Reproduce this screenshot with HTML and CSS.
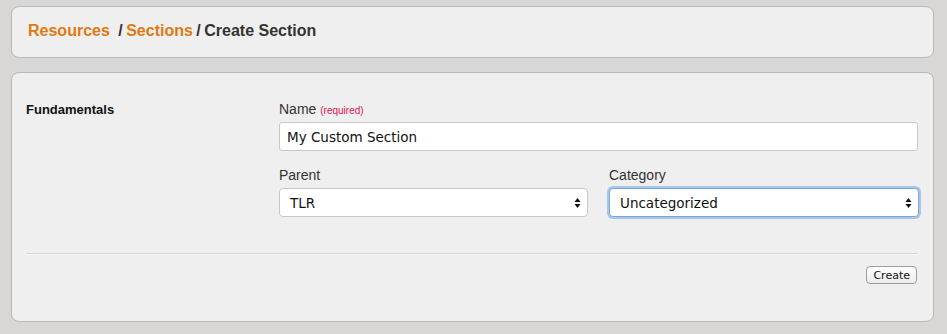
FILE: index.html
```html
<!DOCTYPE html>
<html>
<head>
<meta charset="utf-8">
<link rel="stylesheet" href="styles.css">
</head>
<body>
<div class="panel crumbs">
  <a class="crumb first" href="#">Resources</a> <span class="sep">/</span> <a class="crumb" href="#">Sections</a> <span class="sep">/</span> <span class="current">Create Section</span>
</div>
<div class="panel form">
  <div class="row">
    <div class="legend">Fundamentals</div>
    <div class="fields">
      <div class="field">
        <label class="label">Name <span class="req">(required)</span></label>
        <div class="input">My Custom Section</div>
      </div>
      <div class="pair">
        <div class="field">
          <label class="label">Parent</label>
          <div class="select"><span>TLR</span><svg class="arrows" width="7" height="12" viewBox="0 0 7 12"><path d="M3.5 1 L6.5 5 L0.5 5 Z M3.5 11 L6.5 7 L0.5 7 Z" fill="#111"/></svg></div>
        </div>
        <div class="field">
          <label class="label">Category</label>
          <div class="select focus"><span>Uncategorized</span><svg class="arrows" width="7" height="12" viewBox="0 0 7 12"><path d="M3.5 1 L6.5 5 L0.5 5 Z M3.5 11 L6.5 7 L0.5 7 Z" fill="#111"/></svg></div>
        </div>
      </div>
    </div>
  </div>
  <div class="divider"></div>
  <div class="actions"><button class="btn">Create</button></div>
</div>
</body>
</html>
```
FILE: styles.css
```css
html, body { margin: 0; padding: 0; }
body {
  background: #d8d7d5;
  font-family: "Liberation Sans", Arial, sans-serif;
  padding: 6px 13px 0 11px;
  width: 947px;
  box-sizing: border-box;
}
.panel {
  background: #efefef;
  border: 1px solid #b9b9b9;
  border-radius: 8px;
  box-sizing: border-box;
}
.crumbs {
  height: 52px;
  padding: 14px 0 0 16px;
  font-size: 16px;
  line-height: 20px;
  font-weight: bold;
  word-spacing: -1px;
}
.crumb { color: #e0790f; text-decoration: none; }
.crumb.first { margin-right: 5px; }
.sep { color: #333; }
.current { color: #333; word-spacing: 0; }
.form {
  margin-top: 14px;
  height: 250px;
  padding: 28px 15px 0 14px;
}
.row { display: flex; }
.legend {
  width: 253px;
  font-size: 13px;
  font-weight: bold;
  color: #111;
  padding-top: 1px;
}
.fields { width: 639px; }
.field { display: flex; flex-direction: column; }
.label {
  font-size: 14px;
  color: #333;
  height: 16px;
  line-height: 16px;
  margin-bottom: 5px;
}
.req { color: #e8114e; font-size: 10px; }
.input {
  height: 29px;
  box-sizing: border-box;
  background: #fff;
  border: 1px solid #c8c8c8;
  border-radius: 3px;
  padding: 0 7px;
  display: flex;
  align-items: center;
  font-family: "DejaVu Sans", sans-serif;
  font-size: 13.5px;
  color: #111;
}
.pair {
  display: grid;
  grid-template-columns: 309px 310px;
  column-gap: 21px;
  margin-top: 16px;
}
.pair .label { margin-bottom: 5px; }
.select {
  height: 29px;
  box-sizing: border-box;
  background: #fff;
  border: 1px solid #c8c8c8;
  border-radius: 4px;
  padding: 0 6px 0 10px;
  display: flex;
  align-items: center;
  justify-content: space-between;
  font-family: "DejaVu Sans", sans-serif;
  font-size: 13.5px;
  color: #111;
}
.select.focus {
  border-color: #7aa8dc;
  box-shadow: 0 0 0 2px #a7c6ea;
}
.divider {
  margin-top: 36px;
  height: 1px;
  background: #d4d4d4;
  border-bottom: 1px solid #f7f7f7;
}
.actions {
  display: flex;
  justify-content: flex-end;
  padding-top: 11px;
  padding-right: 1px;
}
.btn {
  font-family: "DejaVu Sans", sans-serif;
  font-size: 11px;
  height: 18px;
  padding: 0 6px;
  background: linear-gradient(#fff, #ececec);
  border: 1px solid #9d9d9d;
  border-radius: 4px;
  color: #111;
  line-height: 15px;
}
```
